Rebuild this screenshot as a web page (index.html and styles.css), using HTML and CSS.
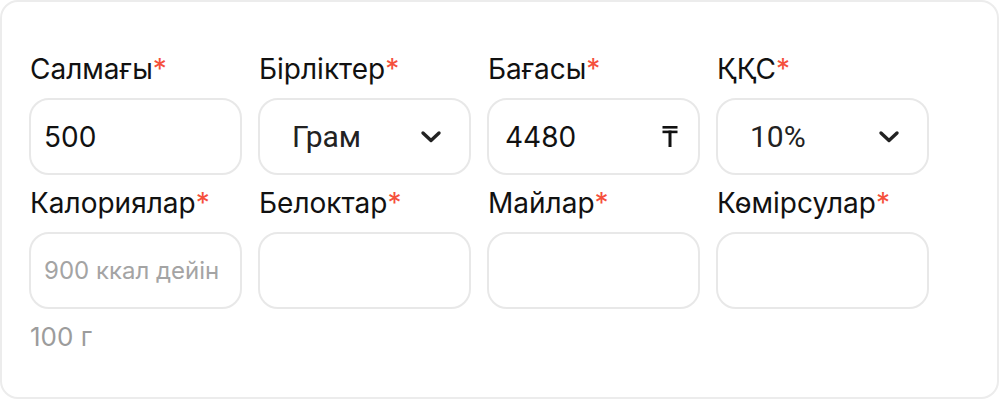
FILE: index.html
```html
<!DOCTYPE html>
<html lang="kk">
<head>
<meta charset="utf-8">
<title>Form</title>
<link rel="stylesheet" href="styles.css">
</head>
<body>
<div class="card">
  <div class="grid">
    <div class="field">
      <label class="label">Салмағы<span class="req">*</span></label>
      <div class="box"><span class="value">500</span></div>
    </div>
    <div class="field">
      <label class="label">Бірліктер<span class="req">*</span></label>
      <div class="box select"><span class="sel-value">Грам</span>
        <svg class="chev" width="22" height="14" viewBox="0 0 22 14"><polyline points="3,3 11,10.5 19,3" fill="none" stroke="#222" stroke-width="3.4" stroke-linecap="round" stroke-linejoin="round"/></svg>
      </div>
    </div>
    <div class="field">
      <label class="label">Бағасы<span class="req">*</span></label>
      <div class="box price"><span class="value">4480</span>
        <svg class="tenge" width="16" height="21" viewBox="0 0 16 21"><rect x="0.5" y="0" width="15" height="2.6" fill="#111"/><rect x="0.5" y="4.6" width="15" height="2.6" fill="#111"/><rect x="6.5" y="4.6" width="3" height="16.4" fill="#111"/></svg>
      </div>
    </div>
    <div class="field">
      <label class="label">ҚҚС<span class="req">*</span></label>
      <div class="box select"><span class="sel-value">10%</span>
        <svg class="chev" width="22" height="14" viewBox="0 0 22 14"><polyline points="3,3 11,10.5 19,3" fill="none" stroke="#222" stroke-width="3.4" stroke-linecap="round" stroke-linejoin="round"/></svg>
      </div>
    </div>

    <div class="field">
      <label class="label">Калориялар<span class="req">*</span></label>
      <div class="box"><span class="placeholder">900 ккал дейін</span></div>
      <div class="hint">100 г</div>
    </div>
    <div class="field">
      <label class="label">Белоктар<span class="req">*</span></label>
      <div class="box"></div>
    </div>
    <div class="field">
      <label class="label">Майлар<span class="req">*</span></label>
      <div class="box"></div>
    </div>
    <div class="field">
      <label class="label">Көмірсулар<span class="req">*</span></label>
      <div class="box"></div>
    </div>
  </div>
</div>
</body>
</html>
```

FILE: styles.css
```css
html, body {
  margin: 0;
  padding: 0;
  background: #ffffff;
}

body {
  font-family: Inter, "Noto Sans", sans-serif;
  color: #111111;
}

.card {
  box-sizing: border-box;
  width: 999px;
  height: 399px;
  border: 2px solid #ececec;
  border-radius: 18px;
  background: #ffffff;
  padding: 50px 0 0 27px;
}

.grid {
  display: grid;
  grid-template-columns: repeat(4, 213px);
  column-gap: 16px;
  row-gap: 11px;
  align-items: start;
}

.field {
  display: flex;
  flex-direction: column;
  gap: 12px;
}

.label {
  font-size: 28px;
  line-height: 34px;
  color: #111111;
  white-space: nowrap;
  padding-left: 1px;
}

.req {
  color: #f5503c;
}

.box {
  box-sizing: border-box;
  height: 77px;
  border: 2px solid #e8e8e8;
  border-radius: 20px;
  display: flex;
  align-items: center;
  padding: 0 13px;
}

.value {
  font-size: 28px;
  color: #111111;
}

.price {
  justify-content: space-between;
  padding-right: 20px;
  padding-left: 16px;
}

.tenge {
  display: block;
}

.select {
  justify-content: space-between;
  padding-left: 32px;
  padding-right: 27px;
}

.sel-value {
  font-family: Roboto, "Liberation Sans", sans-serif;
  font-size: 30px;
  color: #222222;
}

.chev {
  display: block;
}

.placeholder {
  font-size: 24px;
  color: #a4a4a4;
  white-space: nowrap;
}

.hint {
  font-size: 26px;
  line-height: 32px;
  color: #9c9c9c;
  padding-left: 1px;
}
```
